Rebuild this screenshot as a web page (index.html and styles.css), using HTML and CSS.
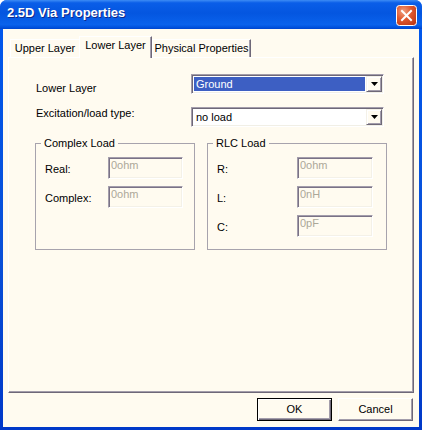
FILE: index.html
```html
<!DOCTYPE html>
<html lang="en">
<head>
    <meta charset="UTF-8">
    <title>2.5D Via Properties</title>
    <link rel="stylesheet" href="styles.css">
</head>
<body>
    <div class="window">
        <div class="titlebar">
            <span class="title">2.5D Via Properties</span>
            <span class="close">
                <svg width="21" height="21" viewBox="0 0 21 21">
                    <defs>
                        <radialGradient id="closeFill" cx="35%" cy="30%" r="80%">
                            <stop offset="0" stop-color="#f0a080"/>
                            <stop offset="0.5" stop-color="#e0582e"/>
                            <stop offset="1" stop-color="#c03a18"/>
                        </radialGradient>
                    </defs>
                    <rect x="0.5" y="0.5" width="20" height="20" rx="3" fill="url(#closeFill)" stroke="#fff"/>
                    <path d="M6 6 L15 15 M15 6 L6 15" stroke="#fff" stroke-width="2" stroke-linecap="square"/>
                </svg>
            </span>
        </div>
        <div class="client">
            <div class="tabs">
                <div class="tab tab-upper">Upper Layer</div>
                <div class="tab tab-lower active">Lower Layer</div>
                <div class="tab tab-phys">Physical Properties</div>
            </div>
            <div class="panel">
                <div class="field-row">
                    <span class="field-label label-layer">Lower Layer</span>
                    <div class="combo">
                        <span class="combo-value selected">Ground</span>
                        <span class="combo-btn"><svg width="7" height="4" viewBox="0 0 7 4"><polygon points="0,0 7,0 3.5,4" fill="#000"/></svg></span>
                    </div>
                </div>
                <div class="field-row">
                    <span class="field-label">Excitation/load type:</span>
                    <div class="combo">
                        <span class="combo-value">no load</span>
                        <span class="combo-btn"><svg width="7" height="4" viewBox="0 0 7 4"><polygon points="0,0 7,0 3.5,4" fill="#000"/></svg></span>
                    </div>
                </div>
                <div class="groups">
                    <div class="group group-complex">
                        <div class="group-title">Complex Load</div>
                        <div class="group-row">
                            <span class="group-label">Real:</span>
                            <span class="edit">0ohm</span>
                        </div>
                        <div class="group-row">
                            <span class="group-label">Complex:</span>
                            <span class="edit">0ohm</span>
                        </div>
                    </div>
                    <div class="group group-rlc">
                        <div class="group-title">RLC Load</div>
                        <div class="group-row">
                            <span class="group-label">R:</span>
                            <span class="edit">0ohm</span>
                        </div>
                        <div class="group-row">
                            <span class="group-label">L:</span>
                            <span class="edit">0nH</span>
                        </div>
                        <div class="group-row">
                            <span class="group-label">C:</span>
                            <span class="edit">0pF</span>
                        </div>
                    </div>
                </div>
            </div>
            <div class="buttons">
                <div class="btn btn-default">OK</div>
                <div class="btn">Cancel</div>
            </div>
        </div>
    </div>
</body>
</html>
```

FILE: styles.css
```css
/* Reset default styles */
body, html, div {
    margin: 0;
    padding: 0;
}

body {
    background: #fff;
    font-family: "Liberation Sans", Arial, sans-serif;
    font-size: 11px;
    line-height: 13px;
    color: #000;
}

.window {
    width: 422px;
    height: 430px;
    display: flex;
    flex-direction: column;
    background: linear-gradient(to bottom, #0058ee, #0a50d8 60%, #0038c8);
    border-radius: 7px 7px 0 0;
    overflow: hidden;
}

.titlebar {
    height: 29px;
    flex: none;
    display: flex;
    align-items: flex-start;
    justify-content: space-between;
    padding: 0 5px 0 7px;
    background: linear-gradient(to bottom, #3d8cf5 0%, #0a5ee8 10%, #0456e0 45%, #0a62ec 85%, #0050dc 95%, #0044cc 100%);
}

.title {
    margin-top: 5px;
    font-size: 13px;
    line-height: 16px;
    font-weight: bold;
    color: #fff;
    text-shadow: 1px 1px #0f2a8c;
}

.close {
    margin-top: 5px;
    width: 21px;
    height: 21px;
}

.close svg {
    display: block;
}

.client {
    flex: 1;
    margin: 0 3px 3px;
    padding: 7px 5px 6px;
    background: #fffbf0;
    display: flex;
    flex-direction: column;
}

/* Tabs */
.tabs {
    display: flex;
    align-items: flex-end;
    height: 21px;
    padding-left: 2px;
}

.tab {
    box-sizing: border-box;
    height: 18px;
    padding-top: 2px;
    text-align: center;
    background: #fffbf0;
    border-top: 1px solid #fff;
    border-left: 1px solid #fff;
}

.tab-upper {
    width: 69px;
}

.tab-lower {
    width: 73px;
}

.tab-phys {
    width: 99px;
    border-right: 1px solid #6e6878;
    box-shadow: inset -1px 0 #a39dab;
}

.tab.active {
    position: relative;
    z-index: 1;
    height: 22px;
    margin-bottom: -1px;
    border-right: 1px solid #6e6878;
    box-shadow: inset -1px 0 #a39dab;
}

.panel {
    box-sizing: border-box;
    height: 336px;
    padding: 16px 0 0 27px;
    border-top: 1px solid #fff;
    border-left: 1px solid #fff;
    border-right: 1px solid #6e6878;
    border-bottom: 1px solid #6e6878;
    box-shadow: inset -1px -1px #a39dab;
}

/* Top fields */
.field-row {
    display: flex;
    align-items: flex-start;
    height: 20px;
}

.field-row + .field-row {
    margin-top: 13px;
}

.field-label {
    width: 155px;
}

.label-layer {
    padding-top: 8px;
}

.combo {
    box-sizing: border-box;
    width: 193px;
    height: 20px;
    display: flex;
    background: #fff;
    border: 1px solid;
    border-color: #a39dab #fff #fff #a39dab;
    box-shadow: inset 1px 1px #6e6878, inset -1px -1px #f1efe6;
    padding: 1px;
}

.combo-value {
    flex: 1;
    height: 14px;
    margin: 1px 1px 1px 1px;
    padding: 1px 0 0 2px;
    box-sizing: border-box;
    line-height: 13px;
}

.combo-value.selected {
    background: #3d5fc3;
    color: #fff;
}

.combo-btn {
    box-sizing: border-box;
    width: 16px;
    height: 16px;
    display: flex;
    align-items: center;
    justify-content: center;
    background: #fffbf0;
    border: 1px solid;
    border-color: #f4f1e8 #6e6878 #6e6878 #f4f1e8;
    box-shadow: inset 1px 1px #fff, inset -1px -1px #a39dab;
}

.combo-btn svg {
    display: block;
}

/* Group boxes */
.groups {
    display: flex;
    gap: 12px;
    margin: 16px 0 0 -1px;
}

.group {
    box-sizing: border-box;
    height: 107px;
    padding-left: 9px;
    border: 1px solid #a7a3ad;
}

.group-complex {
    width: 160px;
}

.group-rlc {
    width: 180px;
}

.group-title {
    width: fit-content;
    margin: -7px 0 0 -4px;
    padding: 0 3px;
    background: #fffbf0;
}

.group-row {
    display: flex;
    align-items: flex-start;
    height: 22px;
    margin-top: 7px;
}

.group-label {
    padding-top: 6px;
}

.group-complex .group-label {
    width: 63px;
}

.group-rlc .group-label {
    width: 80px;
}

.edit {
    box-sizing: border-box;
    width: 75px;
    height: 22px;
    padding: 1px 2px;
    color: #aca899;
    border: 1px solid;
    border-color: #a39dab #fff #fff #a39dab;
    box-shadow: inset 1px 1px #7a7286, inset -1px -1px #f4f1e8;
}

.group-rlc .edit {
    width: 76px;
}

/* Buttons */
.buttons {
    display: flex;
    justify-content: flex-end;
    gap: 6px;
    margin: 5px 1px 0 0;
}

.btn {
    box-sizing: border-box;
    width: 75px;
    height: 23px;
    display: flex;
    align-items: center;
    justify-content: center;
    border: 1px solid;
    border-color: #fff #6e6878 #6e6878 #fff;
    box-shadow: inset -1px -1px #a39dab;
}

.btn-default {
    border-color: #000;
    box-shadow: inset 1px 1px #fff, inset -1px -1px #6e6878, inset -2px -2px #a39dab;
}
```
